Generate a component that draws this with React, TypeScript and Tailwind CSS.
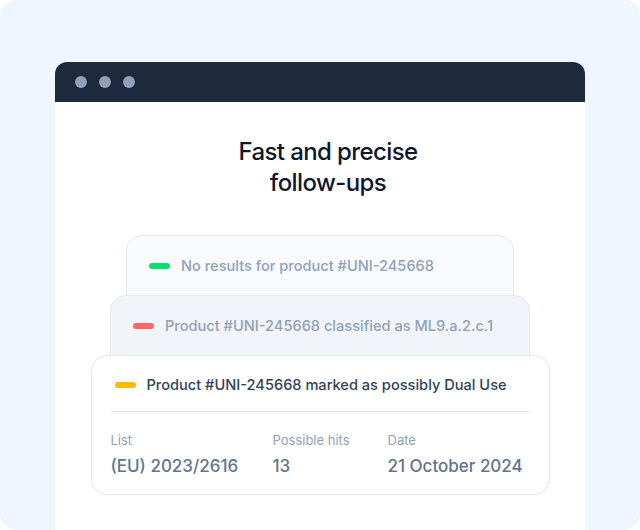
const font = { fontFamily: "Inter, 'Noto Sans', sans-serif" };

function Pill({ color }: { color: string }) {
  return <span className={`h-[6px] w-[21px] shrink-0 rounded-full ${color}`} />;
}

export default function App() {
  return (
    <div
      style={font}
      className="h-[530px] w-[640px] overflow-hidden rounded-2xl bg-blue-50 px-[55px] pt-[62px]"
    >
      <div className="h-full overflow-hidden rounded-t-xl bg-white">
        {/* fake browser bar */}
        <div className="flex h-10 items-center gap-3 bg-slate-800 px-5">
          <span className="size-3 rounded-full bg-slate-400" />
          <span className="size-3 rounded-full bg-slate-400" />
          <span className="size-3 rounded-full bg-slate-400" />
        </div>

        <div className="flex flex-col items-center">
          <h2 className="mt-[34px] pl-4 text-center text-[24px] font-medium leading-[31px] tracking-tight text-slate-900">
            Fast and precise
            <br />
            follow-ups
          </h2>

          <div className="mt-[37px] flex flex-col items-center">
            <div className="flex h-20 w-[388px] items-start gap-[11px] rounded-2xl border border-slate-200 bg-slate-50 px-[22px] pt-5">
              <span className="flex h-5 items-center">
                <Pill color="bg-green-400" />
              </span>
              <span className="text-[14.6px] font-medium leading-5 text-slate-400">
                No results for product #UNI-245668
              </span>
            </div>

            <div className="-mt-5 flex h-20 w-[420px] items-start gap-[11px] rounded-2xl border border-slate-200 bg-slate-100 px-[22px] pt-5">
              <span className="flex h-5 items-center">
                <Pill color="bg-red-400" />
              </span>
              <span className="text-[14.6px] font-medium leading-5 text-slate-400">
                Product #UNI-245668 classified as ML9.a.2.c.1
              </span>
            </div>

            <div className="-mt-5 w-[459px] rounded-2xl border border-slate-200 bg-white px-[19px] pb-4 pt-[19px]">
              <div className="flex items-center gap-[11px] px-[4px]">
                <span className="flex h-5 items-center">
                  <Pill color="bg-amber-400" />
                </span>
                <span className="text-[14.6px] font-medium leading-5 text-slate-700">
                  Product #UNI-245668 marked as possibly Dual Use
                </span>
              </div>

              <div className="mt-4 border-t border-slate-200 pt-[19px]">
                <dl className="grid grid-cols-[162px_115px_1fr]">
                  <div>
                    <dt className="text-[13px] leading-[18px] text-slate-400">List</dt>
                    <dd className="mt-[5px] text-[17px] font-medium leading-6 text-slate-500">
                      (EU) 2023/2616
                    </dd>
                  </div>
                  <div>
                    <dt className="text-[13px] leading-[18px] text-slate-400">
                      Possible hits
                    </dt>
                    <dd className="mt-[5px] text-[17px] font-medium leading-6 text-slate-500">
                      13
                    </dd>
                  </div>
                  <div>
                    <dt className="text-[13px] leading-[18px] text-slate-400">Date</dt>
                    <dd className="mt-[5px] text-[17px] font-medium leading-6 text-slate-500">
                      21 October 2024
                    </dd>
                  </div>
                </dl>
              </div>
            </div>
          </div>
        </div>
      </div>
    </div>
  );
}
